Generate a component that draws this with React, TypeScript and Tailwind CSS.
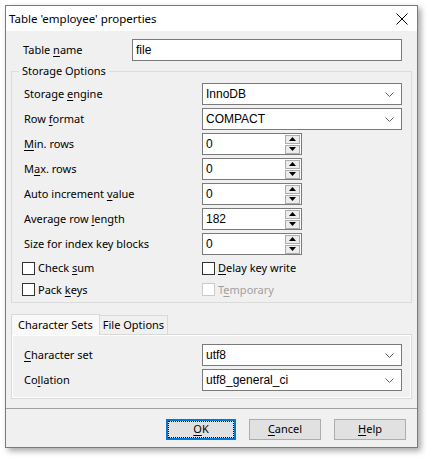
import React from 'react';

const UI = { fontFamily: '"Noto Sans", "Open Sans", sans-serif' };
const FIELD = { fontFamily: '"Liberation Sans", Arial, sans-serif' };

const U = ({ children }: { children: React.ReactNode }) => <span className="underline underline-offset-2">{children}</span>;

const Chevron = () => (
  <svg width="9" height="5" viewBox="0 0 9 5" className="shrink-0">
    <path d="M0.5 0.5 L4.5 4.5 L8.5 0.5" fill="none" stroke="#606060" strokeWidth="1" />
  </svg>
);

const Combo = ({ value }: { value: string }) => (
  <div className="w-[200px] h-[22px] bg-white border border-[#7a7a7a] flex items-center pl-[3px] pr-[7px] text-[12px] text-black" style={FIELD}>
    <span className="flex-1">{value}</span>
    <Chevron />
  </div>
);

const Tri = ({ up }: { up?: boolean }) => (
  <svg width="7" height="4" viewBox="0 0 7 4">
    <path d={up ? 'M0 4 L3.5 0 L7 4 Z' : 'M0 0 L3.5 4 L7 0 Z'} fill="#000" />
  </svg>
);

const Spin = ({ value }: { value: string }) => (
  <div className="w-[100px] h-[22px] bg-white border border-[#7a7a7a] flex items-center pl-[3px] pr-[1px] text-[12px] text-black" style={FIELD}>
    <span className="flex-1">{value}</span>
    <div className="flex flex-col gap-[1px]">
      <div className="w-[15px] h-[9px] bg-[#ececec] border border-[#acacac] flex items-center justify-center"><Tri up /></div>
      <div className="w-[15px] h-[9px] bg-[#ececec] border border-[#acacac] flex items-center justify-center"><Tri /></div>
    </div>
  </div>
);

const Row = ({ label, children }: { label: React.ReactNode; children: React.ReactNode }) => (
  <div className="flex items-center h-[22px] mb-[3px]">
    <div className="w-[178px] text-[11px]">{label}</div>
    {children}
  </div>
);

const Check = ({ label, disabled }: { label: React.ReactNode; disabled?: boolean }) => (
  <div className={`flex items-center gap-[3px] text-[11px] ${disabled ? 'text-[#a0a0a0]' : 'text-black'}`}>
    <div className={`w-[13px] h-[13px] bg-white border ${disabled ? 'border-[#cccccc]' : 'border-[#333333]'}`} />
    <span>{label}</span>
  </div>
);

const Btn = ({ children, focus }: { children: React.ReactNode; focus?: boolean }) => (
  <div className={`h-[21px] bg-[#e1e1e1] flex items-center justify-center text-[11px] ${focus ? 'w-[70px] border-2 border-[#0078d7]' : 'w-[72px] border border-[#adadad]'}`}>
    {focus ? (
      <div className="w-full h-full border border-dotted border-black flex items-center justify-center">{children}</div>
    ) : children}
  </div>
);

export default function App() {
  return (
    <div className="w-[426px] h-[458px] bg-white pt-[5px] pl-[5px]" style={UI}>
      <div className="w-[413px] h-[443px] border border-[#7a7a7a] flex flex-col shadow-[3px_3px_6px_rgba(0,0,0,0.35)]">
        <div className="h-[25px] bg-white flex items-center pl-[3px] pr-[9px] text-[11.5px] text-black">
          <span className="flex-1">Table 'employee' properties</span>
          <svg width="12" height="12" viewBox="0 0 12 12">
            <path d="M0.5 0.5 L11.5 11.5 M11.5 0.5 L0.5 11.5" stroke="#000" strokeWidth="1" />
          </svg>
        </div>
        <div className="flex-1 bg-[#f0f0f0] flex flex-col pt-[8px] pl-[5px] text-black">
          <div className="flex items-center h-[22px] pl-[12px]">
            <div className="w-[109px] text-[11px]">Table <U>n</U>ame</div>
            <div className="w-[270px] h-[22px] bg-white border border-[#7a7a7a] flex items-center pl-[3px] text-[12px]" style={FIELD}>file</div>
          </div>

          <div className="relative mt-[10px] w-[401px] h-[232px] border border-[#dcdcdc] pt-[11px] pl-[12px]">
            <span className="absolute -top-[9px] left-[7px] px-[3px] bg-[#f0f0f0] text-[11px]">Storage Options</span>
            <Row label={<>Storage <U>e</U>ngine</>}><Combo value="InnoDB" /></Row>
            <Row label={<>Row <U>f</U>ormat</>}><Combo value="COMPACT" /></Row>
            <Row label={<><U>M</U>in. rows</>}><Spin value="0" /></Row>
            <Row label={<>M<U>a</U>x. rows</>}><Spin value="0" /></Row>
            <Row label={<>Auto increment <U>v</U>alue</>}><Spin value="0" /></Row>
            <Row label={<>Average row <U>l</U>ength</>}><Spin value="182" /></Row>
            <Row label={<>Size for index key blocks</>}><Spin value="0" /></Row>
            <div className="flex flex-col gap-[5px] mt-[5px]">
              <div className="flex -ml-[2px]">
                <div className="w-[180px]"><Check label={<>Check <U>s</U>um</>} /></div>
                <Check label={<><U>D</U>elay key write</>} />
              </div>
              <div className="flex -ml-[2px]">
                <div className="w-[180px]"><Check label={<>Pack <U>k</U>eys</>} /></div>
                <Check label={<>T<U>e</U>mporary</>} disabled />
              </div>
            </div>
          </div>

          <div className="mt-[10px] w-[401px]">
            <div className="flex items-end h-[21px]">
              <div className="h-[21px] px-[6px] bg-[#f9f9f9] border border-b-0 border-[#d9d9d9] flex items-center text-[11px] relative z-10 -mb-[1px]">Character Sets</div>
              <div className="h-[19px] px-[3px] bg-[#f0f0f0] border border-l-0 border-b-0 border-[#d9d9d9] flex items-center text-[11px]">File Options</div>
            </div>
            <div className="h-[65px] border border-[#d9d9d9] bg-[#f0f0f0] pt-[9px] pl-[12px] flex flex-col gap-[3px]" style={{ boxShadow: 'inset 0 0 0 1px #ffffff' }}>
              <div className="flex items-center h-[22px]">
                <div className="w-[178px] text-[11px]"><U>C</U>haracter set</div>
                <Combo value="utf8" />
              </div>
              <div className="flex items-center h-[22px]">
                <div className="w-[178px] text-[11px]">Co<U>l</U>lation</div>
                <Combo value="utf8_general_ci" />
              </div>
            </div>
          </div>

          <div className="mt-[9px] -ml-[5px] border-t border-[#a0a0a0] bg-[#f0f0f0] flex-1 flex justify-end gap-[13px] pt-[10px] pr-[11px]">
            <Btn focus><U>O</U>K</Btn>
            <Btn><U>C</U>ancel</Btn>
            <Btn><U>H</U>elp</Btn>
          </div>
        </div>
      </div>
    </div>
  );
}
